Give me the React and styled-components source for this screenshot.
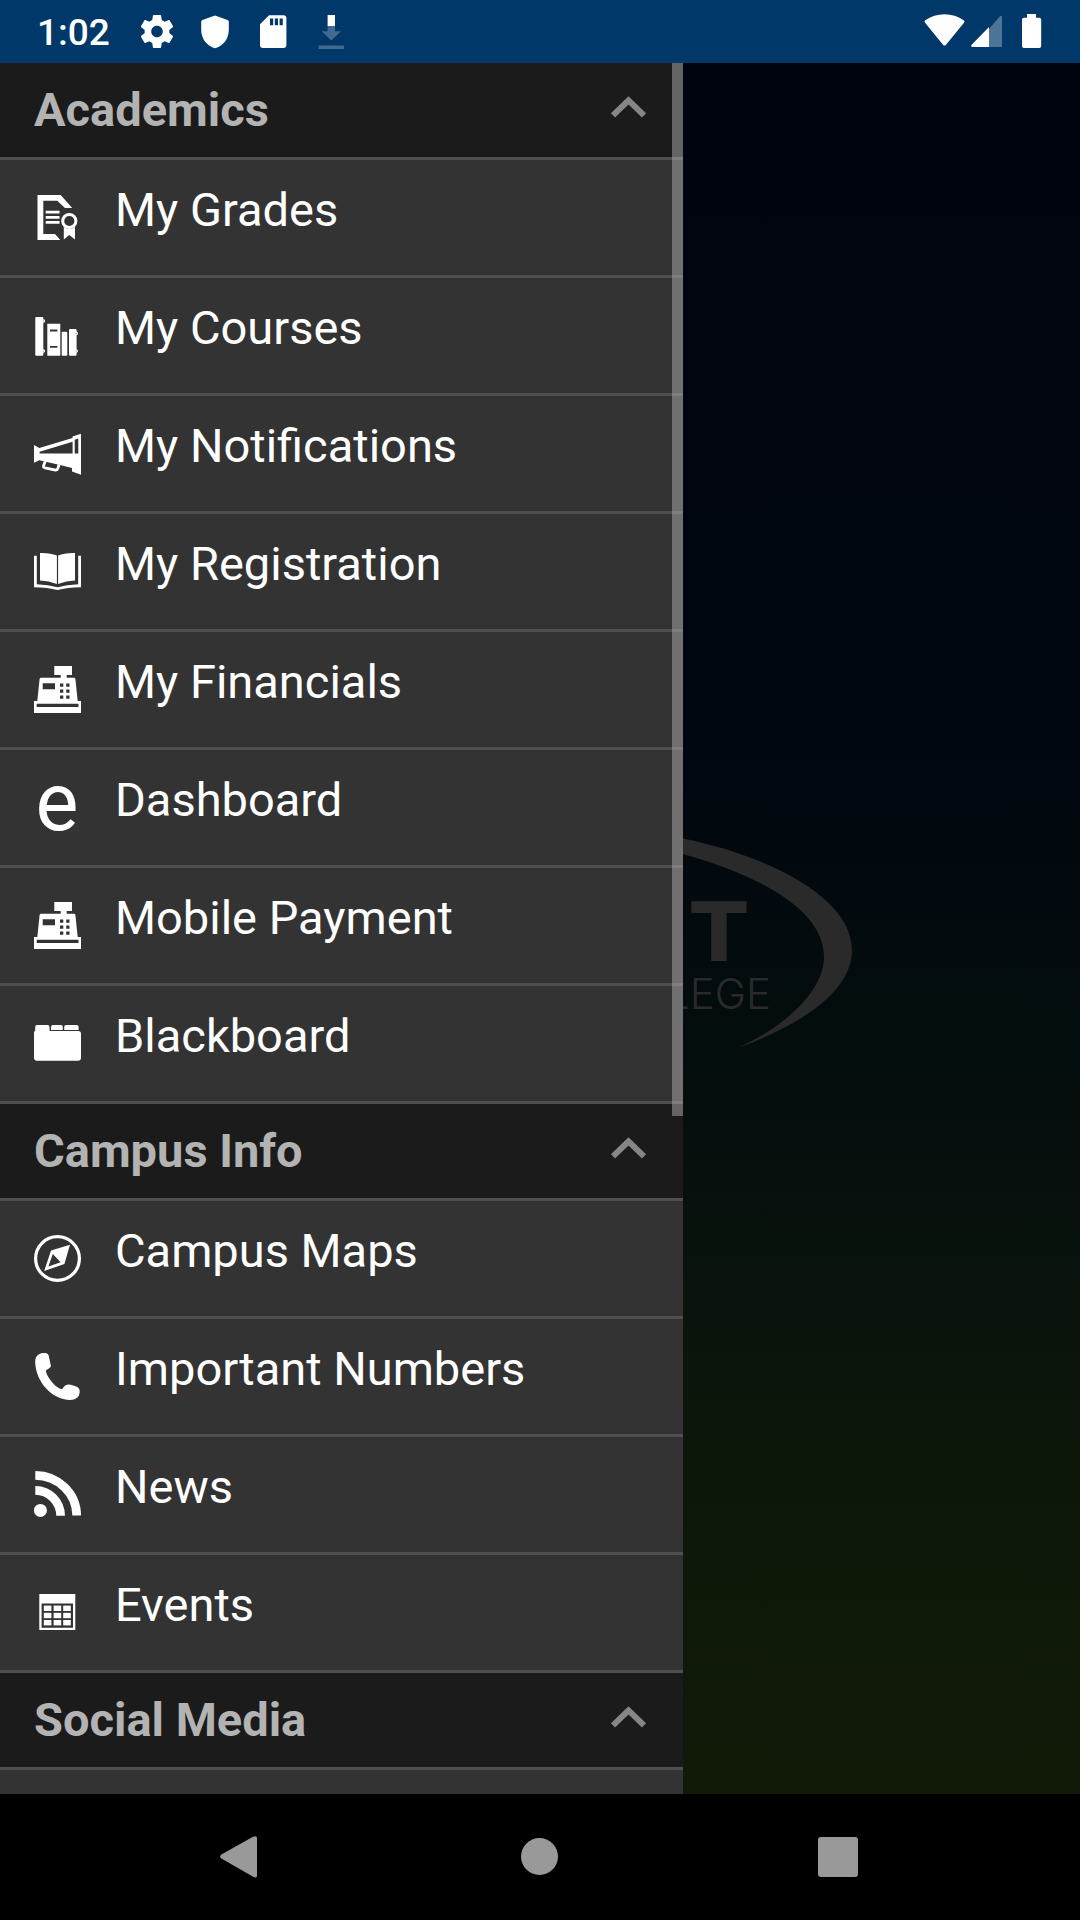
import React, { useState } from "react";
import styled, { createGlobalStyle } from "styled-components";

const GradesIcon = () => (
  <Icon viewBox="0 0 47 47">
    <path d="M3.5 1H26.7L38.2 14H31L23.3 6.7H9.3V40H21L26.3 46H3.5Z" />
    <path d="M11.7 16.8H25.5V19.5H11.7ZM11.7 22H25.5V24.7H11.7ZM11.7 27H25.5V29.7H11.7Z" />
    <circle cx="35.3" cy="27" r="6.6" fill="none" stroke="#fff" strokeWidth="3" />
    <path d="M29.8 33Q35.3 37 41 33V45.6L35.3 41L29.8 45.6Z" />
  </Icon>
);

const CoursesIcon = () => (
  <Icon viewBox="0 0 47 47">
    <rect x="1.3" y="5" width="8" height="38.7" rx="1" />
    <rect x="27.7" y="19.7" width="5.6" height="24" rx="1" />
    <rect x="35" y="17" width="7.6" height="26.7" rx="1" />
    <path
      fillRule="evenodd"
      d="M13.3 11.7H26.3V43.7H13.3ZM16 17.6V19.4H23.4V17.6ZM16 34V35.8H23.4V34Z"
    />
    <g fill="#777" stroke="#fff" strokeWidth="1.2">
      <circle cx="9.4" cy="9" r="1.2" />
      <circle cx="9.4" cy="39" r="1.2" />
      <circle cx="42.2" cy="21.4" r="1.2" />
      <circle cx="42.2" cy="39" r="1.2" />
    </g>
  </Icon>
);

const MegaphoneIcon = () => (
  <Icon viewBox="0 0 47 47">
    <path
      fillRule="evenodd"
      d="M0 15L5.3 18L38.5 8V6.6L47 3.7V44.7L38 41.5V38L26 35L5.3 30.3L0 32.7ZM5.6 21.8V23.4H38.6V11.8ZM40.7 9.8V23.4H44.3V8.6Z"
    />
    <path
      d="M11.3 31L9.4 36.2Q9.4 37.4 11 37.8L21.5 40Q23.3 40.2 23.8 38.6L25 34.5"
      fill="none"
      stroke="#fff"
      strokeWidth="2.8"
    />
  </Icon>
);

const BookIcon = () => (
  <Icon viewBox="0 0 47 47">
    <path d="M0 7.7H2.8V36.3Q14 36.8 23.5 39.2Q33 36.8 44.2 36.3V7.7H47V39.2Q33 39.5 23.5 42Q14 39.5 0 39.2Z" />
    <path d="M6 5Q16 4.6 22.9 7.6V36Q15 32.8 6 32.4Z" />
    <path d="M41 5Q31 4.6 24.1 7.6V36Q32 32.8 41 32.4Z" />
  </Icon>
);

const RegisterIcon = () => (
  <Icon viewBox="0 0 47 47">
    <path
      fillRule="evenodd"
      d="M20.3 0H38V9H32.7V11.7H40Q41.2 11.7 41.4 13L43.7 35H47V47H0V35H3.3L5.6 13Q5.8 11.7 7 11.7H26.7V9H20.3ZM8.7 17.3V23.3H21V17.3ZM26 17.5V20.8H29.3V17.5ZM32.2 17.5V20.8H35.5V17.5ZM26 23.5V26.8H29.3V23.5ZM32.2 23.5V26.8H35.5V23.5ZM26 29.4V32.7H29.3V29.4ZM32.2 29.4V32.7H35.5V29.4ZM2.7 37.8V41H44.5V37.8Z"
    />
  </Icon>
);

const LetterIcon = () => (
  <Icon viewBox="0 0 47 47" aria-hidden="true">
    <text x="23" y="46" fontSize="81" textAnchor="middle">
      e
    </text>
  </Icon>
);

const FolderIcon = () => (
  <Icon viewBox="0 0 47 47">
    <path d="M3 5H13.4Q15.6 5 15.6 7.4V11H44.4Q47 11 47 13.6V37.8Q47 40.8 44 40.8H3Q0 40.8 0 37.8V13Q0 11.4 1.2 10.6V7Q1.2 5 3 5Z" />
    <path d="M17 10V7Q17 5 19 5H26.8Q28.8 5 28.8 7V10Z" />
    <path d="M30.2 10V7Q30.2 5 32.2 5H42.6Q44.6 5 44.6 7V10Z" />
  </Icon>
);

const CompassIcon = () => (
  <Icon viewBox="0 0 47 47">
    <circle cx="23.5" cy="23.5" r="21.9" fill="none" stroke="#fff" strokeWidth="3.2" />
    <path
      fillRule="evenodd"
      d="M36 9.8L30.4 29L10.2 36L17 15.6ZM18.8 19L14.4 31.6L26.6 27.2Z"
    />
  </Icon>
);

const PhoneIcon = () => (
  <Icon viewBox="0 0 47 47">
    <path d="M5 1.2C8 -.4 13.8 -.4 14.6 2.2L16.9 12.8C17 15 13.2 16.2 12 17.6C11.6 22.4 21.6 35.4 27.8 36.2C29.6 34.6 31 31.4 34.2 31.4C37.6 31.6 41 32.6 44 34.4C46.6 36.4 46.2 41.4 43.4 44.6C41.2 46.6 38 47.2 34.8 47C17.4 46 2 29 1.2 9.6C1 5.6 2 3 5 1.2Z" />
  </Icon>
);

const RssIcon = () => (
  <Icon viewBox="0 0 47 47">
    <circle cx="6.4" cy="39.4" r="6.5" />
    <g fill="none" stroke="#fff" strokeWidth="8.7">
      <path d="M1.3 4.3A41.5 40.5 0 0 1 42.7 44.5" />
      <path d="M1.3 19.4A25.4 25.4 0 0 1 26.6 44.8" />
    </g>
  </Icon>
);

const CalendarIcon = () => (
  <Icon viewBox="0 0 47 47">
    <path fillRule="evenodd" d="M5.3 5H41.3V41H5.3ZM7.6 14.6V38.8H39V14.6Z" />
    {[16.6, 23.8, 31].map((y) =>
      [9.8, 19.6, 29.2].map((x) => (
        <rect key={`${x}-${y}`} x={x} y={y} width="7.6" height="5.4" />
      ))
    )}
  </Icon>
);

const sections = [
  {
    title: "Academics",
    items: [
      { label: "My Grades", icon: GradesIcon },
      { label: "My Courses", icon: CoursesIcon },
      { label: "My Notifications", icon: MegaphoneIcon },
      { label: "My Registration", icon: BookIcon },
      { label: "My Financials", icon: RegisterIcon },
      { label: "Dashboard", icon: LetterIcon },
      { label: "Mobile Payment", icon: RegisterIcon },
      { label: "Blackboard", icon: FolderIcon },
    ],
  },
  {
    title: "Campus Info",
    items: [
      { label: "Campus Maps", icon: CompassIcon },
      { label: "Important Numbers", icon: PhoneIcon },
      { label: "News", icon: RssIcon },
      { label: "Events", icon: CalendarIcon },
    ],
  },
  { title: "Social Media", items: [] },
];

const Section = ({ title, items }) => {
  const [open, setOpen] = useState(true);
  return (
    <section>
      <SectionHeader aria-expanded={open} onClick={() => setOpen(!open)}>
        {title}
        <Chevron viewBox="0 0 40 40" $open={open}>
          <path d="M4 25.4L19.5 10.4L35 25.4" />
        </Chevron>
      </SectionHeader>
      {open && (
        <List>
          {items.map(({ label, icon: ItemIcon }) => (
            <li key={label}>
              <MenuLink href="#">
                <ItemIcon />
                {label}
              </MenuLink>
            </li>
          ))}
        </List>
      )}
    </section>
  );
};

const StatusBar = () => (
  <Status>
    <Clock>1:02</Clock>
    <StatusIcons>
      <StatusIcon viewBox="0 0 40 39">
        <path
          transform="translate(0.2 -0.3) scale(1.65)"
          d="M19.43 12.98c.04-.32.07-.64.07-.98s-.03-.66-.07-.98l2.11-1.65c.19-.15.24-.42.12-.64l-2-3.46c-.12-.22-.39-.3-.61-.22l-2.49 1c-.52-.4-1.08-.73-1.69-.98l-.38-2.65C14.46 2.18 14.25 2 14 2h-4c-.25 0-.46.18-.49.42l-.38 2.65c-.61.25-1.17.59-1.69.98l-2.49-1c-.23-.09-.49 0-.61.22l-2 3.46c-.13.22-.07.49.12.64l2.11 1.65c-.04.32-.07.65-.07.98s.03.66.07.98l-2.11 1.65c-.19.15-.24.42-.12.64l2 3.46c.12.22.39.3.61.22l2.49-1c.52.4 1.08.73 1.69.98l.38 2.65c.03.24.24.42.49.42h4c.25 0 .46-.18.49-.42l.38-2.65c.61-.25 1.17-.59 1.69-.98l2.49 1c.23.09.49 0 .61-.22l2-3.46c.12-.22.07-.49-.12-.64l-2.11-1.65zM12 15.5c-1.93 0-3.5-1.57-3.5-3.5s1.57-3.5 3.5-3.5 3.5 1.57 3.5 3.5-1.57 3.5-3.5 3.5z"
        />
      </StatusIcon>
      <StatusIcon viewBox="0 0 40 39">
        <path d="M20 3.4L32.6 8Q33.8 8.5 33.8 9.8V18C33.8 27 28 34 20 36.2C12 34 6.2 27 6.2 18V9.8Q6.2 8.5 7.4 8Z" />
      </StatusIcon>
      <StatusIcon viewBox="0 0 40 39">
        <path
          fillRule="evenodd"
          d="M16 3.2H30.4Q33.4 3.2 33.4 6.2V33Q33.4 36 30.4 36H10Q7 36 7 33V12.2ZM17 6.6V13.3H20.2V6.6ZM21.8 6.6V13.3H25V6.6ZM26.6 6.6V13.3H29.8V6.6Z"
        />
      </StatusIcon>
      <StatusIcon viewBox="0 0 40 39">
        <path d="M16.6 3H24V14H16.6Z" />
        <path opacity=".25" d="M16.6 14H24V19.3H30L20.3 28.4L10.6 19.3H16.6ZM7.6 33.6H33V37H7.6Z" />
      </StatusIcon>
    </StatusIcons>
    <Signals>
      <StatusIcon $wide viewBox="0 0 44 39">
        <path d="M3.1 10.8Q1.6 9.4 3.3 8.2C14 .2 31 .2 41.7 8.2Q43.4 9.4 42 10.8L24 32.7Q22.5 34.4 21 32.7Z" />
      </StatusIcon>
      <StatusIcon $wide viewBox="0 0 44 39">
        <path opacity=".3" d="M23 16.8L33.6 4.8Q36 2.8 36 5V35H23Z" />
        <path d="M23 15V35H6Q4.6 34.4 5.4 33Z" />
      </StatusIcon>
      <StatusIcon $wide viewBox="0 0 44 39">
        <path d="M17 2H26V5.8H29.2Q31.2 5.8 31.2 7.8V34Q31.2 36 29.2 36H14Q12 36 12 34V7.8Q12 5.8 14 5.8H17Z" />
      </StatusIcon>
    </Signals>
  </Status>
);

const CollegeLogo = () => (
  <Logo viewBox="0 0 200 260">
    <path d="M0 39.6C90 58 169 100 169 151C169 191 122 224 56 248.6C104 226 141 191 141 158C141 115 88 80 0 55Z" />
    <LogoInitial x="64" y="162" textAnchor="end">
      T
    </LogoInitial>
    <text x="88" y="210" fontSize="42" fontWeight="300" textAnchor="end">
      LEGE
    </text>
  </Logo>
);

const App = () => (
  <Screen>
    <GlobalStyle />
    <StatusBar />
    <Content>
      <Drawer>
        <Menu>
          {sections.map((section) => (
            <Section key={section.title} {...section} />
          ))}
        </Menu>
        <ScrollThumb />
      </Drawer>
      <Backdrop>
        <CollegeLogo />
      </Backdrop>
    </Content>
    <NavBar>
      <NavButton aria-label="Back">
        <svg width="60" height="60" viewBox="0 0 60 60">
          <path d="M11.4 31.4Q9 29.6 11.4 27.6L43 9.8Q47 8 47 11V48.6Q47 51.4 43.6 50Z" />
        </svg>
      </NavButton>
      <NavButton aria-label="Home">
        <svg width="60" height="60" viewBox="0 0 60 60">
          <circle cx="29.5" cy="29.5" r="18.5" />
        </svg>
      </NavButton>
      <NavButton aria-label="Recent apps">
        <svg width="60" height="60" viewBox="0 0 60 60">
          <rect x="8" y="10" width="40" height="40" rx="3" />
        </svg>
      </NavButton>
    </NavBar>
  </Screen>
);

export default App;

const GlobalStyle = createGlobalStyle`
  * {
    box-sizing: border-box;
  }
  body {
    margin: 0;
    background: #000;
    font-family: Roboto, sans-serif;
  }
`;

const Screen = styled.div`
  display: flex;
  flex-direction: column;
  height: 100vh;
`;

const Status = styled.header`
  display: flex;
  align-items: center;
  height: 63px;
  padding: 0 26px 0 37px;
  background: #003869;
  color: #fff;
`;

const Clock = styled.time`
  width: 100px;
  padding-top: 3px;
  font-size: 37px;
  font-weight: 500;
  line-height: 42px;
`;

const StatusIcons = styled.div`
  display: flex;
  gap: 18px;
`;

const Signals = styled.div`
  display: flex;
  margin-left: auto;
`;

const StatusIcon = styled.svg`
  width: ${(props) => (props.$wide ? "44px" : "40px")};
  height: 39px;
  fill: #fff;
`;

const Content = styled.main`
  flex: 1;
  min-height: 0;
  display: grid;
  grid-template-columns: 683fr 397fr;
  grid-template-rows: 100%;
`;

const Drawer = styled.nav`
  position: relative;
  min-width: 0;
  background: #333;
`;

const Menu = styled.div`
  height: 100%;
  overflow-y: auto;
  scrollbar-width: none;
`;

const ScrollThumb = styled.div`
  position: absolute;
  top: 0;
  right: 0;
  width: 11px;
  height: 60.85%;
  background: rgba(173, 173, 173, 0.5);
`;

const SectionHeader = styled.button`
  display: flex;
  align-items: center;
  justify-content: space-between;
  width: 100%;
  height: 97px;
  padding: 0 34px;
  border: none;
  border-bottom: 3px solid #4f4f4f;
  background: #1b1b1b;
  color: #b3b3b3;
  font-family: inherit;
  font-size: 47px;
  font-weight: 700;
  line-height: 56px;
  text-align: left;
`;

const Chevron = styled.svg`
  width: 40px;
  height: 40px;
  fill: none;
  stroke: #868686;
  stroke-width: 6;
  transform: ${(props) => (props.$open ? "none" : "rotate(180deg)")};
`;

const List = styled.ul`
  margin: 0;
  padding: 0;
  list-style: none;
`;

const MenuLink = styled.a`
  display: flex;
  align-items: flex-start;
  gap: 34px;
  height: 118px;
  padding: 22px 34px 0;
  border-bottom: 3px solid #4f4f4f;
  color: #fff;
  font-size: 47px;
  line-height: 56px;
  text-decoration: none;
  white-space: nowrap;
`;

const Icon = styled.svg`
  flex: none;
  width: 47px;
  height: 47px;
  margin-top: 12px;
  overflow: visible;
  fill: #fff;
`;

const Backdrop = styled.div`
  display: flex;
  align-items: center;
  min-width: 0;
  background: linear-gradient(#00040f 0%, #00060f 35%, #01090f 45%, #050e0d 60%, #0a140c 73%, #0e1808 85%, #111a07 100%);
`;

const Logo = styled.svg`
  width: 200px;
  height: 260px;
  fill: #2a2a2a;
  font-family: Inter, sans-serif;
`;

const LogoInitial = styled.text`
  font-family: "DejaVu Sans", sans-serif;
  font-size: 82px;
  font-weight: 700;
`;

const NavBar = styled.footer`
  display: grid;
  grid-template-columns: repeat(3, 1fr);
  align-items: center;
  height: 126px;
  padding: 0 90px;
  background: #000;
`;

const NavButton = styled.button`
  display: flex;
  justify-content: center;
  padding: 0;
  border: none;
  background: none;
  fill: #999;
`;
